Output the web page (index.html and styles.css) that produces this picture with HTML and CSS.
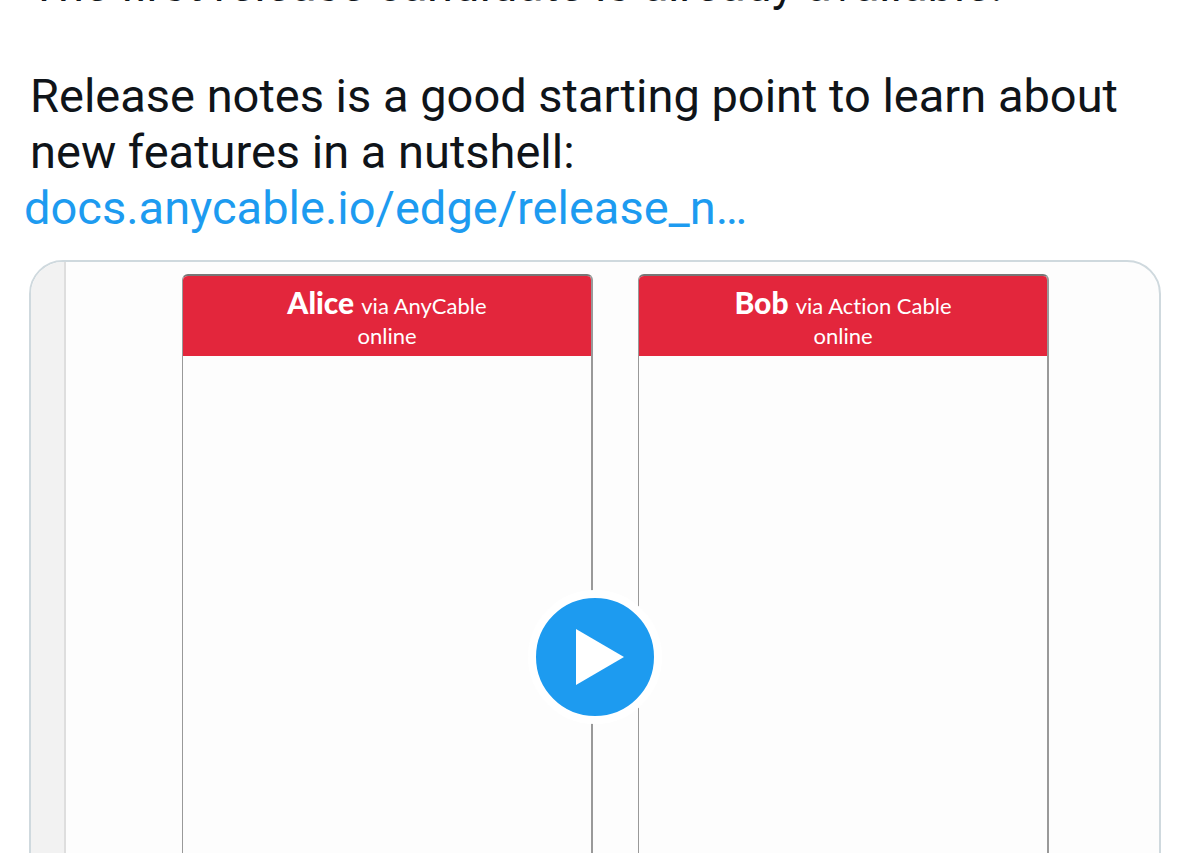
FILE: index.html
```html
<!DOCTYPE html>
<html lang="en">
<head>
    <meta charset="UTF-8">
    <meta name="viewport" content="width=device-width, initial-scale=1.0">
    <title>AnyCable release</title>
    <link rel="stylesheet" href="styles.css">
</head>
<body>
    <article class="tweet">
        <div class="tweet-text">
            <p>The first release candidate is already available!</p>
            <p>Release notes is a good starting point to learn about new features in a nutshell:</p>
            <a href="#">docs.anycable.io/edge/release_n…</a>
        </div>

        <div class="media">
            <div class="sidebar"></div>
            <div class="chats">
                <section class="chat">
                    <header>
                        <div><strong>Alice</strong> via AnyCable</div>
                        <div>online</div>
                    </header>
                </section>
                <section class="chat">
                    <header>
                        <div><strong>Bob</strong> via Action Cable</div>
                        <div>online</div>
                    </header>
                </section>
            </div>
            <button type="button" class="play" aria-label="Play">
                <svg viewBox="0 0 118 118"><path d="M40 31v56l48-28z" fill="#fff"/></svg>
            </button>
        </div>
    </article>
</body>
</html>
```

FILE: styles.css
```css
body {
    margin: 0;
    height: 100vh;
    overflow: hidden;
    background: #fff;
    color: #0f1419;
    font-family: Roboto, sans-serif;
}
.tweet {
    margin: -43px 29px 0 30px;
}
.tweet-text {
    font-size: 47px;
    line-height: 56px;
}
.tweet-text p {
    margin: 0;
}
.tweet-text p + p {
    margin-top: 55px;
}
.tweet-text a {
    display: block;
    margin-left: -6px;
    color: #1d9bf0;
    text-decoration: none;
}
.media {
    position: relative;
    display: flex;
    box-sizing: border-box;
    aspect-ratio: 1132 / 794;
    margin: 24px 0 0 -1px;
    border: 2px solid #cfd9de;
    border-radius: 34px;
    overflow: hidden;
    background: #fdfdfd;
}
.sidebar {
    width: 33px;
    background: #f2f2f2;
    border-right: 2px solid #dedede;
}
.chats {
    flex: 1;
    display: flex;
    gap: 45px;
    padding: 12px 110px 0 116px;
}
.chat {
    flex: 1;
    border: 2px solid #999;
    border-top-color: #777;
    border-left-width: 1px;
    border-radius: 6px 6px 0 0;
    overflow: hidden;
}
.chat header {
    box-sizing: border-box;
    height: 80px;
    padding-top: 10px;
    background: #e3263c;
    color: #fff;
    font-family: Lato, sans-serif;
    font-size: 22px;
    font-variant-ligatures: none;
    line-height: 32px;
    text-align: center;
}
.chat header div + div {
    line-height: 28px;
}
.chat strong {
    margin-right: 2px;
    font-size: 30px;
    font-weight: 900;
}
.play {
    position: absolute;
    top: 50%;
    left: 50%;
    transform: translate(-50%, -50%);
    box-sizing: border-box;
    width: 134px;
    height: 134px;
    padding: 0;
    border: 8px solid #fff;
    border-radius: 50%;
    background: #1d9bf0;
    cursor: pointer;
}
.play svg {
    display: block;
}
```
